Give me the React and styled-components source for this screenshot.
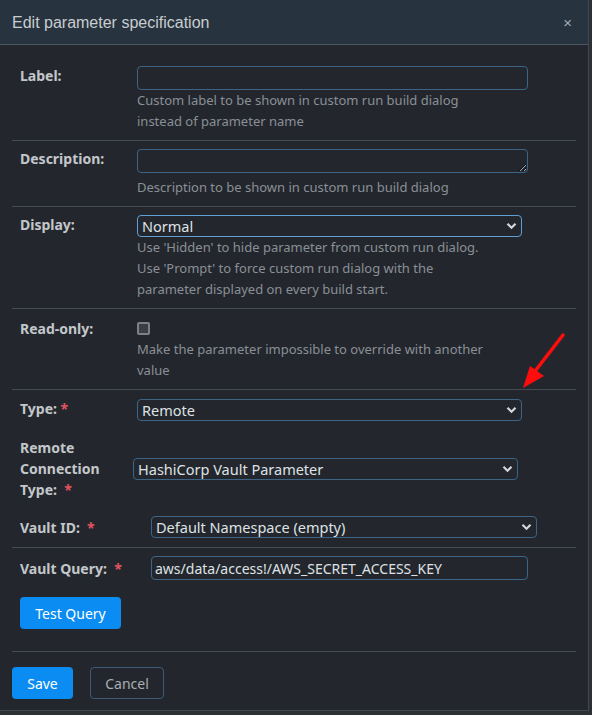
import React from "react";
import styled, { createGlobalStyle } from "styled-components";

const GlobalStyle = createGlobalStyle`
  html, body {
    margin: 0;
    padding: 0;
    background: #2c3035;
  }
  body {
    font-family: "Noto Sans", "Open Sans", sans-serif;
  }
`;

export default function App() {
  return (
    <>
      <GlobalStyle />
      <Dialog>
        <Header>
          <Title>Edit parameter specification</Title>
          <Close>×</Close>
        </Header>

        <Body>
          <Row $divided>
            <Label>Label:</Label>
            <Field>
              <TextInput type="text" />
              <Help>
                Custom label to be shown in custom run build dialog
                <br />
                instead of parameter name
              </Help>
            </Field>
          </Row>

          <Row $divided>
            <Label>Description:</Label>
            <Field>
              <TextArea rows={1} />
              <Help>Description to be shown in custom run build dialog</Help>
            </Field>
          </Row>

          <Row $divided>
            <Label>Display:</Label>
            <Field>
              <Select value="Normal" width={385} focused />
              <Help>
                Use 'Hidden' to hide parameter from custom run dialog.
                <br />
                Use 'Prompt' to force custom run dialog with the
                <br />
                parameter displayed on every build start.
              </Help>
            </Field>
          </Row>

          <Row $divided>
            <Label $offset={1}>Read-only:</Label>
            <Field>
              <CheckLine>
                <Checkbox />
              </CheckLine>
              <Help>
                Make the parameter impossible to override with another
                <br />
                value
              </Help>
            </Field>
          </Row>

          <TypeSection>
            <Row $pb={16}>
              <Label>
                Type: <Req>*</Req>
              </Label>
              <Field>
                <Select value="Remote" width={385} />
              </Field>
            </Row>

            <SubRow $labelWidth={113}>
              <Label>
                <LabelLine>Remote</LabelLine>
                <LabelLine>Connection</LabelLine>
                <LabelLine>
                  Type:&nbsp; <Req>*</Req>
                </LabelLine>
              </Label>
              <Select value="HashiCorp Vault Parameter" width={385} />
            </SubRow>

            <SubRow $labelWidth={131} $pt={16}>
              <Label>
                Vault ID:&nbsp; <Req>*</Req>
              </Label>
              <Select value="Default Namespace (empty)" width={386} />
            </SubRow>
          </TypeSection>

          <QuerySection>
            <SubRow $labelWidth={131}>
              <Label>
                Vault Query:&nbsp; <Req>*</Req>
              </Label>
              <QueryInput type="text" defaultValue="aws/data/access!/AWS_SECRET_ACCESS_KEY" />
            </SubRow>
            <TestButton>Test Query</TestButton>
          </QuerySection>

          <Footer>
            <PrimaryButton>Save</PrimaryButton>
            <OutlineButton>Cancel</OutlineButton>
          </Footer>
        </Body>

        <Arrow width="60" height="70" viewBox="0 0 60 70">
          <line x1="51" y1="9" x2="17" y2="53" stroke="#ff0d0d" strokeWidth="3.5" strokeLinecap="round" />
          <polygon points="11,62 18,40 32,50" fill="#ff0d0d" />
        </Arrow>
      </Dialog>
    </>
  );
}

function Select({ value, width, focused }) {
  return (
    <SelectWrap style={{ width }}>
      <SelectBox $focused={focused} value={value} onChange={() => {}}>
        <option>{value}</option>
      </SelectBox>
      <Chevron width="11" height="8" viewBox="0 0 11 8">
        <path d="M1.5 1.8 L5.5 5.8 L9.5 1.8" fill="none" stroke="#d4d7da" strokeWidth="2.2" />
      </Chevron>
    </SelectWrap>
  );
}

// --- Styled Components ---

const Dialog = styled.div`
  position: relative;
  width: 589px;
  height: 711px;
  background: #23272d;
  border-right: 1px solid #41474e;
  border-bottom: 1px solid #41474e;
  box-sizing: border-box;
  overflow: hidden;
`;

const Header = styled.div`
  height: 44px;
  display: flex;
  align-items: center;
  justify-content: space-between;
  padding: 0 12px;
  background: #27333e;
  border-bottom: 1px solid #4a5661;
`;

const Title = styled.h4`
  margin: 0;
  font-family: "Liberation Sans", Arial, sans-serif;
  font-weight: 400;
  font-size: 16px;
  color: #c9cdd1;
  padding-top: 1px;
`;

const Close = styled.span`
  font-family: "Liberation Sans", Arial, sans-serif;
  font-size: 15px;
  color: #a7abaf;
  margin-right: 4px;
`;

const Body = styled.div`
  padding: 12px 12px 0;
`;

const Row = styled.div`
  display: flex;
  align-items: flex-start;
  padding: 8px 8px ${(p) => (p.$pb != null ? p.$pb : 8)}px;
  border-bottom: ${(p) => (p.$divided ? "1px solid #444b52" : "none")};

  &:first-child {
    padding-top: 9px;
  }
`;

const Label = styled.div`
  flex: 0 0 117px;
  font-size: 14px;
  font-weight: 700;
  line-height: 21px;
  color: #c3c7cb;
  margin-top: ${(p) => (p.$offset != null ? p.$offset : -1)}px;
  white-space: nowrap;
`;

const LabelLine = styled.div`
  height: 21px;
`;

const Req = styled.span`
  color: #e0535f;
`;

const Field = styled.div`
  display: flex;
  flex-direction: column;
  align-items: flex-start;
`;

const TextInput = styled.input`
  width: 391px;
  height: 24px;
  box-sizing: border-box;
  background: #23272d;
  border: 1px solid #3b6486;
  border-radius: 4px;
  outline: none;
  font-family: "Noto Sans", sans-serif;
  font-size: 14px;
  color: #dfe2e5;
  padding: 0 4px;
`;

const TextArea = styled.textarea`
  display: block;
  width: 391px;
  height: 24px;
  box-sizing: border-box;
  background: #23272d;
  border: 1px solid #3b6486;
  border-radius: 4px;
  outline: none;
  resize: vertical;
  margin-bottom: 4px;
`;

const Help = styled.div`
  font-size: 13px;
  line-height: 21px;
  color: #8a8f96;
`;

const CheckLine = styled.div`
  height: 22px;
  display: flex;
  align-items: flex-start;
  padding-top: 5px;
  box-sizing: border-box;
`;

const Checkbox = styled.span`
  width: 13px;
  height: 13px;
  box-sizing: border-box;
  border: 2px solid #7d8084;
  border-radius: 2px;
  background: #3b3e43;
`;

const SelectWrap = styled.div`
  position: relative;
  height: 22px;
`;

const SelectBox = styled.select`
  appearance: none;
  width: 100%;
  height: 22px;
  box-sizing: border-box;
  background: #23272d;
  border: 1px solid ${(p) => (p.$focused ? "#5f9fd6" : "#3b6486")};
  border-radius: 4px;
  font-family: "Noto Sans", sans-serif;
  font-size: 14.5px;
  color: #dfe2e5;
  padding: 0 4px;
  outline: none;
  line-height: 20px;
`;

const Chevron = styled.svg`
  position: absolute;
  right: 5px;
  top: 7px;
  pointer-events: none;
`;

const TypeSection = styled.div`
  border-bottom: 1px solid #444b52;
  padding-bottom: 9px;
`;

const SubRow = styled.div`
  display: flex;
  align-items: center;
  padding: ${(p) => p.$pt || 0}px 8px 0;

  ${Label} {
    flex: 0 0 ${(p) => p.$labelWidth}px;
    margin-top: 0;
  }
`;

const QuerySection = styled.div`
  padding-top: 8px;
  padding-bottom: 22px;
  border-bottom: 1px solid #444b52;
`;

const QueryInput = styled.input`
  width: 377px;
  height: 24px;
  box-sizing: border-box;
  background: #23272d;
  border: 1px solid #3b6486;
  border-radius: 4px;
  outline: none;
  font-family: "Noto Sans", sans-serif;
  font-size: 14px;
  color: #dfe2e5;
  padding: 0 3px;
`;

const Button = styled.button`
  height: 32px;
  box-sizing: border-box;
  border-radius: 4px;
  font-family: "Noto Sans", sans-serif;
  font-size: 14px;
  cursor: pointer;
`;

const TestButton = styled(Button)`
  margin: 17px 0 0 8px;
  width: 101px;
  background: #0a8cf2;
  border: none;
  color: #ffffff;
`;

const Footer = styled.div`
  display: flex;
  gap: 17px;
  padding-top: 15px;
`;

const PrimaryButton = styled(Button)`
  width: 61px;
  background: #0a8cf2;
  border: none;
  color: #ffffff;
`;

const OutlineButton = styled(Button)`
  width: 74px;
  background: transparent;
  border: 1px solid #3d5a74;
  color: #a9adb2;
`;

const Arrow = styled.svg`
  position: absolute;
  left: 512px;
  top: 326px;
  pointer-events: none;
`;
